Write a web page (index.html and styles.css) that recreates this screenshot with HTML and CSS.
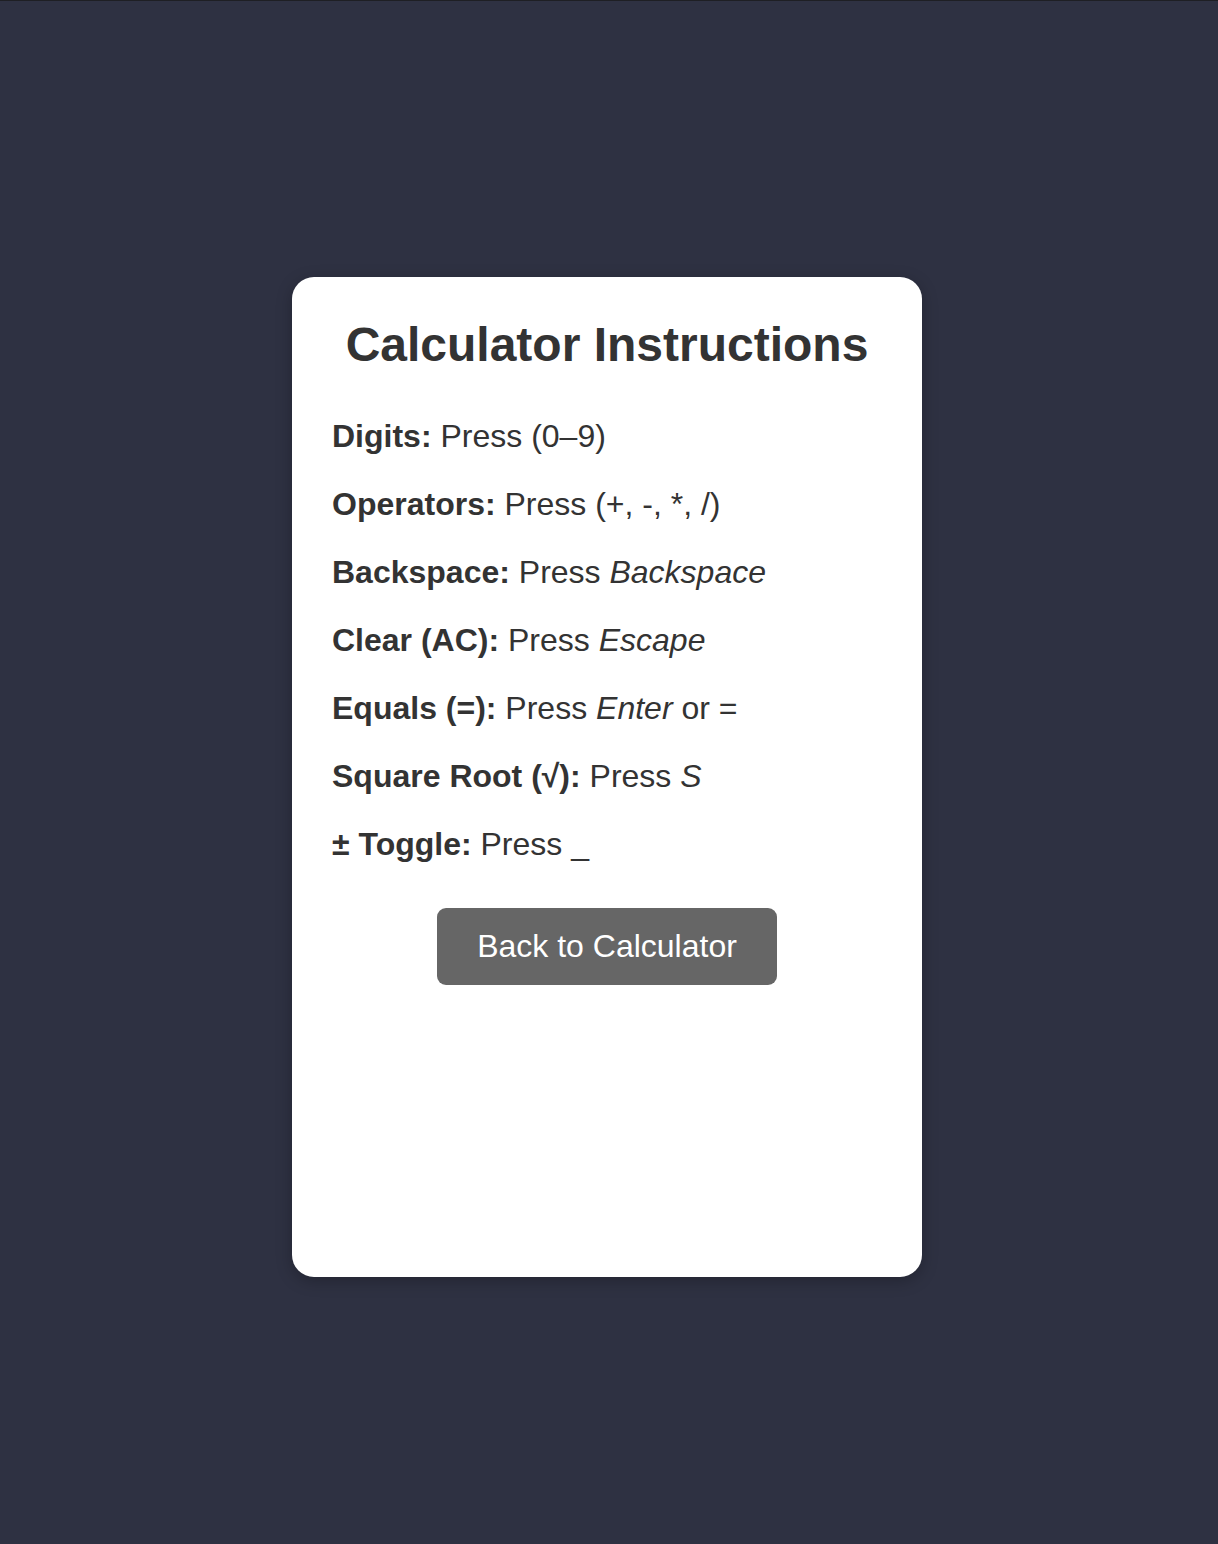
FILE: index.html
```html
<!DOCTYPE html>
<html lang="en">
<head>
<meta charset="utf-8">
<title>Calculator Instructions</title>
<link rel="stylesheet" href="styles.css">
</head>
<body>
<main class="page">
  <section class="card">
    <h1 class="title">Calculator Instructions</h1>
    <p class="item"><strong>Digits:</strong> Press (0–9)</p>
    <p class="item"><strong>Operators:</strong> Press (+, -, *, /)</p>
    <p class="item"><strong>Backspace:</strong> Press <em>Backspace</em></p>
    <p class="item"><strong>Clear (AC):</strong> Press <em>Escape</em></p>
    <p class="item"><strong>Equals (=):</strong> Press <em>Enter</em> or =</p>
    <p class="item"><strong>Square Root (√):</strong> Press <em>S</em></p>
    <p class="item"><strong>± Toggle:</strong> Press _</p>
    <div class="actions">
      <button class="back-btn" type="button">Back to Calculator</button>
    </div>
  </section>
</main>
</body>
</html>
```

FILE: styles.css
```css
html, body {
  margin: 0;
  padding: 0;
}
body {
  background: #2e3142;
  border-top: 1px solid #1e1f24;
  font-family: "Liberation Sans", Arial, sans-serif;
  color: #333;
}
.page {
  min-height: 1543px;
  display: flex;
  align-items: center;
  justify-content: center;
  padding-right: 4px;
  padding-top: 9px;
  box-sizing: border-box;
}
.card {
  width: 630px;
  height: 1000px;
  box-sizing: border-box;
  background: #fff;
  border-radius: 22px;
  padding: 40px;
  box-shadow: 0 4px 16px rgba(0, 0, 0, 0.25);
}
.title {
  font-size: 48px;
  font-weight: bold;
  text-align: center;
  margin: 0 0 45px;
  line-height: 56px;
}
.item {
  font-size: 32px;
  margin: 0 0 32px;
  line-height: 36px;
}
.actions {
  display: flex;
  justify-content: center;
  padding-top: 14px;
}
.back-btn {
  width: 340px;
  height: 77px;
  background: #666;
  color: #fff;
  border: none;
  border-radius: 9px;
  font-family: "Liberation Sans", Arial, sans-serif;
  font-size: 32px;
}
```
